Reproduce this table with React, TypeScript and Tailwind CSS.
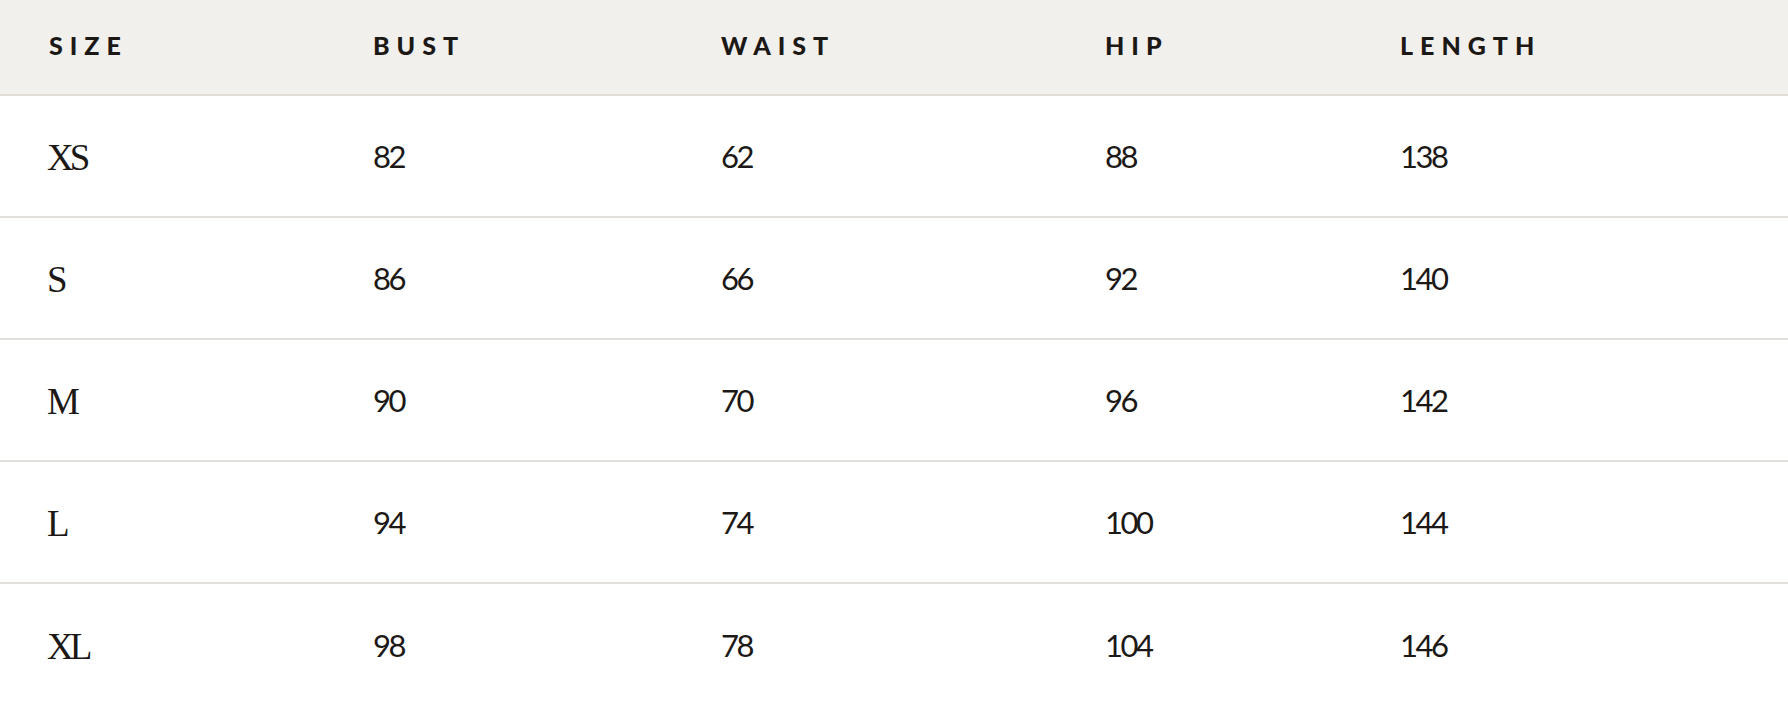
import React from "react";

const headers = ["SIZE", "BUST", "WAIST", "HIP", "LENGTH"];
const rows: [string, string, string, string, string][] = [
  ["XS", "82", "62", "88", "138"],
  ["S", "86", "66", "92", "140"],
  ["M", "90", "70", "96", "142"],
  ["L", "94", "74", "100", "144"],
  ["XL", "98", "78", "104", "146"],
];

const cols = "grid grid-cols-[324px_348px_384px_295px_1fr] items-center pl-[49px]";

export default function App() {
  return (
    <div className="w-full min-h-[705px] bg-white text-[#1c1816]">
      <div className={`${cols} h-[96px] bg-[#f2f0ed] border-b-2 border-[#e2ddd7] pb-[4px]`}>
        {headers.map((h) => (
          <div
            key={h}
            className="font-['Lato','Liberation_Sans',sans-serif] font-black text-[25px] tracking-[7px] leading-none"
          >
            {h}
          </div>
        ))}
      </div>
      {rows.map((r, ri) => (
        <div
          key={r[0]}
          className={`${cols} h-[122px] ${ri < rows.length - 1 ? "border-b-2 border-[#e3e0dc]" : ""}`}
        >
          <div className="font-['Liberation_Serif',serif] text-[37px] tracking-[-4px] leading-none pt-[2px] -ml-[2px]">
            {r[0]}
          </div>
          {r.slice(1).map((v, i) => (
            <div
              key={i}
              className="font-['Lato','Liberation_Sans',sans-serif] font-normal text-[31px] tracking-[-2.5px] leading-none"
            >
              {v}
            </div>
          ))}
        </div>
      ))}
    </div>
  );
}
